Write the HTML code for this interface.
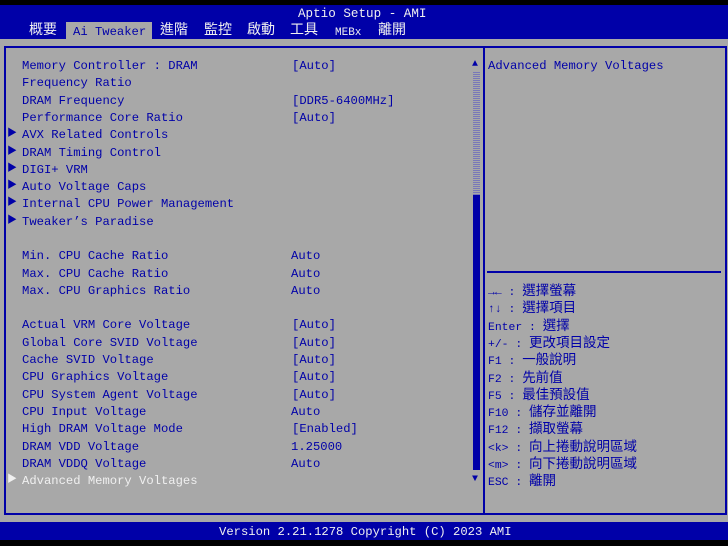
<!DOCTYPE html>
<html><head><meta charset="utf-8"><style>
*{margin:0;padding:0;box-sizing:border-box}
body{width:728px;height:546px;background:#a8a8a8;position:relative;overflow:hidden;font-family:"Liberation Mono","Noto Sans CJK TC",monospace;font-size:12.2px;color:#0000a8}
.a{position:absolute;white-space:pre;line-height:14px}
.w{color:#f0f0f0}
.cj{font-family:"Liberation Mono","Noto Sans CJK TC",sans-serif;font-size:14px}
.t{position:absolute;font-size:10px;line-height:14px}
.h{position:absolute;left:488px;white-space:pre;font-size:11.4px;line-height:16px}
.h b{font-weight:normal;font-family:"Noto Sans CJK TC",sans-serif;font-size:13.5px}
</style></head><body>
<div style="position:absolute;left:0;top:0;width:728px;height:5px;background:#000"></div>
<div style="position:absolute;left:0;top:5px;width:728px;height:34px;background:#0000a8"></div>
<div class="a w" style="left:298px;top:7px;font-size:12.6px">Aptio Setup - AMI</div>
<div style="position:absolute;left:66px;top:22px;width:86px;height:17px;background:#a8a8a8"></div>
<div class="a w cj" style="left:29px;top:24px">概要</div>
<div class="a" style="left:73px;top:25px">Ai Tweaker</div>
<div class="a w cj" style="left:160px;top:24px">進階</div>
<div class="a w cj" style="left:204px;top:24px">監控</div>
<div class="a w cj" style="left:247px;top:24px">啟動</div>
<div class="a w cj" style="left:290px;top:24px">工具</div>
<div class="a w" style="left:335px;top:26px;font-size:11px">MEBx</div>
<div class="a w cj" style="left:378px;top:24px">離開</div>

<div style="position:absolute;left:4px;top:46px;width:723px;height:469px;border:2px solid #0000a8"></div>
<div style="position:absolute;left:483px;top:46px;width:2px;height:469px;background:#0000a8"></div>
<div style="position:absolute;left:487px;top:271px;width:234px;height:2px;background:#0000a8"></div>
<div class="a" style="left:472px;top:58px;font-size:10px">▲</div>
<div style="position:absolute;left:473px;top:72px;width:7px;height:123px;background:repeating-linear-gradient(0deg,#7878b8 0 1px,#a8a8a8 1px 2px)"></div>
<div style="position:absolute;left:473px;top:195px;width:7px;height:275px;background:#0000a8"></div>
<div class="a" style="left:472px;top:473px;font-size:10px">▼</div>

<div class="a" style="left:22px;top:59px">Memory Controller : DRAM</div><div class="a" style="left:292px;top:59px">[Auto]</div>
<div class="a" style="left:22px;top:76px">Frequency Ratio</div>
<div class="a" style="left:22px;top:94px">DRAM Frequency</div><div class="a" style="left:292px;top:94px">[DDR5-6400MHz]</div>
<div class="a" style="left:22px;top:111px">Performance Core Ratio</div><div class="a" style="left:292px;top:111px">[Auto]</div>
<div class="t" style="left:7px;top:128px">▶</div><div class="a" style="left:22px;top:128px">AVX Related Controls</div>
<div class="t" style="left:7px;top:146px">▶</div><div class="a" style="left:22px;top:146px">DRAM Timing Control</div>
<div class="t" style="left:7px;top:163px">▶</div><div class="a" style="left:22px;top:163px">DIGI+ VRM</div>
<div class="t" style="left:7px;top:180px">▶</div><div class="a" style="left:22px;top:180px">Auto Voltage Caps</div>
<div class="t" style="left:7px;top:197px">▶</div><div class="a" style="left:22px;top:197px">Internal CPU Power Management</div>
<div class="t" style="left:7px;top:215px">▶</div><div class="a" style="left:22px;top:215px">Tweaker’s Paradise</div>
<div class="a" style="left:22px;top:249px">Min. CPU Cache Ratio</div><div class="a" style="left:291px;top:249px">Auto</div>
<div class="a" style="left:22px;top:267px">Max. CPU Cache Ratio</div><div class="a" style="left:291px;top:267px">Auto</div>
<div class="a" style="left:22px;top:284px">Max. CPU Graphics Ratio</div><div class="a" style="left:291px;top:284px">Auto</div>
<div class="a" style="left:22px;top:318px">Actual VRM Core Voltage</div><div class="a" style="left:292px;top:318px">[Auto]</div>
<div class="a" style="left:22px;top:336px">Global Core SVID Voltage</div><div class="a" style="left:292px;top:336px">[Auto]</div>
<div class="a" style="left:22px;top:353px">Cache SVID Voltage</div><div class="a" style="left:292px;top:353px">[Auto]</div>
<div class="a" style="left:22px;top:370px">CPU Graphics Voltage</div><div class="a" style="left:292px;top:370px">[Auto]</div>
<div class="a" style="left:22px;top:388px">CPU System Agent Voltage</div><div class="a" style="left:292px;top:388px">[Auto]</div>
<div class="a" style="left:22px;top:405px">CPU Input Voltage</div><div class="a" style="left:291px;top:405px">Auto</div>
<div class="a" style="left:22px;top:422px">High DRAM Voltage Mode</div><div class="a" style="left:292px;top:422px">[Enabled]</div>
<div class="a" style="left:22px;top:440px">DRAM VDD Voltage</div><div class="a" style="left:291px;top:440px">1.25000</div>
<div class="a" style="left:22px;top:457px">DRAM VDDQ Voltage</div><div class="a" style="left:291px;top:457px">Auto</div>
<div class="t w" style="left:7px;top:474px">▶</div><div class="a w" style="left:22px;top:474px">Advanced Memory Voltages</div>

<div class="a" style="left:488px;top:59px">Advanced Memory Voltages</div>
<div class="h" style="top:281px">→← : <b>選擇螢幕</b></div>
<div class="h" style="top:298px">↑↓ : <b>選擇項目</b></div>
<div class="h" style="top:316px">Enter : <b>選擇</b></div>
<div class="h" style="top:333px">+/- : <b>更改項目設定</b></div>
<div class="h" style="top:350px">F1 : <b>一般說明</b></div>
<div class="h" style="top:368px">F2 : <b>先前值</b></div>
<div class="h" style="top:385px">F5 : <b>最佳預設值</b></div>
<div class="h" style="top:402px">F10 : <b>儲存並離開</b></div>
<div class="h" style="top:419px">F12 : <b>擷取螢幕</b></div>
<div class="h" style="top:437px">&lt;k&gt; : <b>向上捲動說明區域</b></div>
<div class="h" style="top:454px">&lt;m&gt; : <b>向下捲動說明區域</b></div>
<div class="h" style="top:471px">ESC : <b>離開</b></div>

<div style="position:absolute;left:0;top:522px;width:728px;height:18px;background:#0000a8"></div>
<div class="a w" style="left:219px;top:525px">Version 2.21.1278 Copyright (C) 2023 AMI</div>
<div style="position:absolute;left:0;top:540px;width:728px;height:6px;background:#000"></div>
</body></html>
